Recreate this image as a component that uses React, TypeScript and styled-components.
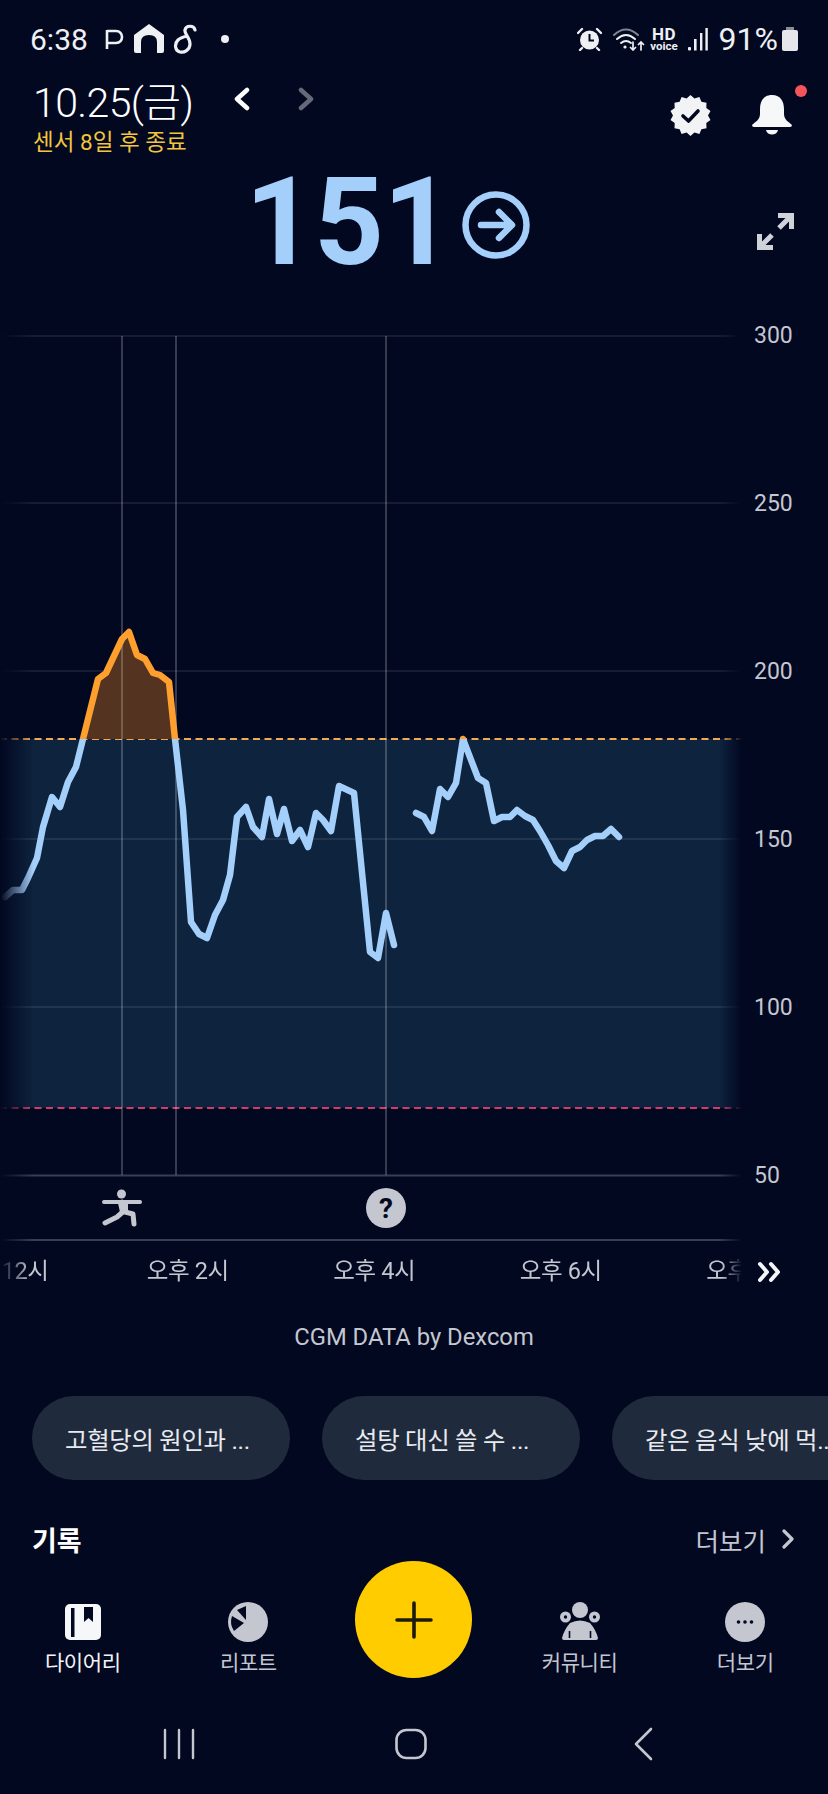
import styled, { createGlobalStyle } from 'styled-components';

const BG = '#020820';
const BLUE = '#a5cffb';
const GRAY = '#c4c6d0';
const FONT = `Roboto, "Noto Sans CJK KR", sans-serif`;

const GlobalStyle = createGlobalStyle`
    html, body {
        margin: 0;
        padding: 0;
        background: ${BG};
    }
`

const Page = styled.div`
    width: 828px;
    height: 1794px;
    overflow: hidden;
    background: ${BG};
    font-family: ${FONT};
    color: #fff;
    display: flex;
    flex-direction: column;
`

const StatusBar = styled.div`
    height: 70px;
    flex-shrink: 0;
    padding: 8px 29px 0 30px;
    box-sizing: border-box;
    display: flex;
    align-items: center;
    justify-content: space-between;
    font-size: 30px;
    color: #eef0f3;
`

const StatusGroup = styled.div`
    display: flex;
    align-items: center;
`

const Clock = styled.span`
    margin-right: 17px;
`

const HdBadge = styled.div`
    width: 29px;
    display: flex;
    flex-direction: column;
    align-items: center;
    font-weight: 700;
    font-size: 17px;
    line-height: 13px;
    letter-spacing: 0.5px;
    margin: 0 9px 0 3px;
    span {
        font-size: 11.5px;
        line-height: 10px;
        letter-spacing: 0;
    }
`

const Percent = styled.span`
    font-size: 32px;
    margin: 0 3px 0 11px;
`

const Header = styled.div`
    height: 90px;
    flex-shrink: 0;
    padding: 0 27px 0 33px;
    box-sizing: border-box;
    display: flex;
    justify-content: space-between;
    align-items: flex-start;
`

const DateRow = styled.div`
    display: flex;
    align-items: center;
    height: 58px;
`

const DateText = styled.span`
    font-size: 41px;
    font-weight: 300;
    letter-spacing: -0.6px;
    margin-right: 41px;
`

const SensorNote = styled.div`
    font-size: 22.5px;
    line-height: 26px;
    margin-top: 1px;
    color: #f2c53d;
`

const HeaderIcons = styled.div`
    position: relative;
    display: flex;
    gap: 41px;
    padding: 25px 9px 0 0;
`

const Reading = styled.div`
    height: 161px;
    flex-shrink: 0;
    padding: 0 34px 0 245px;
    box-sizing: border-box;
    display: flex;
    align-items: flex-start;
`

const Value = styled.span`
    margin-top: 2px;
    font-size: 122px;
    line-height: 122px;
    font-weight: 700;
    color: ${BLUE};
    letter-spacing: -1px;
`

const TrendIcon = styled.svg`
    margin: 31px 0 0 10px;
`

const ExpandIcon = styled.svg`
    margin: 53px 0 0 auto;
`

const ChartRow = styled.div`
    display: flex;
    height: 925px;
    flex-shrink: 0;
`

const YAxis = styled.div`
    display: flex;
    flex-direction: column;
    gap: 138px;
    padding-left: 12px;
`

const YLabel = styled.span`
    height: 30px;
    line-height: 30px;
    font-size: 23px;
    color: ${GRAY};
`

const TimeRow = styled.div`
    height: 52px;
    flex-shrink: 0;
    display: flex;
    align-items: center;
`

const TimeTrack = styled.div`
    width: 742px;
    overflow: hidden;
    display: flex;
    padding-bottom: 6px;
    -webkit-mask-image: linear-gradient(to right, transparent 0, #000 30px, #000 722px, transparent 742px);
    mask-image: linear-gradient(to right, transparent 0, #000 30px, #000 722px, transparent 742px);
`

const TimeLabels = styled.div`
    display: flex;
    margin-left: -92px;
`

const TimeLabel = styled.span`
    width: 186.5px;
    flex-shrink: 0;
    text-align: center;
    font-size: 23.5px;
    letter-spacing: -0.4px;
    color: ${GRAY};
`

const SkipIcon = styled.svg`
    margin-left: 15px;
`

const Credit = styled.div`
    height: 78px;
    flex-shrink: 0;
    display: flex;
    align-items: center;
    justify-content: center;
    font-size: 23.8px;
    color: ${GRAY};
`

const Chips = styled.div`
    margin-top: 20px;
    padding-left: 32px;
    display: flex;
    gap: 32px;
    overflow: hidden;
    flex-shrink: 0;
`

const Chip = styled.div`
    width: 258px;
    height: 84px;
    flex-shrink: 0;
    box-sizing: border-box;
    padding-left: 33px;
    border-radius: 42px;
    background: #1f2b3d;
    display: flex;
    align-items: center;
    font-size: 24.4px;
    letter-spacing: -0.3px;
    color: #e8eaef;
    white-space: nowrap;
    overflow: hidden;
`

const SectionHead = styled.div`
    margin-top: 41px;
    height: 36px;
    flex-shrink: 0;
    padding: 0 34px 0 32px;
    display: flex;
    align-items: center;
    justify-content: space-between;
`

const SectionTitle = styled.span`
    font-size: 27px;
    font-weight: 700;
`

const MoreLink = styled.span`
    display: flex;
    align-items: center;
    gap: 16px;
    font-size: 25.5px;
    color: ${GRAY};
`

const NavBar = styled.div`
    margin-top: 4px;
    height: 119px;
    flex-shrink: 0;
    display: grid;
    grid-template-columns: repeat(5, 1fr);
`

const NavItem = styled.div<{ $active?: boolean }>`
    display: flex;
    flex-direction: column;
    align-items: center;
    padding-top: 41px;
    gap: 8px;
    font-size: 21px;
    line-height: 26px;
    letter-spacing: -0.4px;
    color: ${(p) => (p.$active ? '#f4f5f8' : GRAY)};
`

const NavIconBox = styled.div`
    height: 40px;
    display: flex;
    align-items: center;
    justify-content: center;
`

const Fab = styled.div`
    width: 117px;
    height: 117px;
    border-radius: 50%;
    background: #ffcc00;
    justify-self: center;
    display: flex;
    align-items: center;
    justify-content: center;
`

const SystemNav = styled.div`
    margin-top: 34px;
    height: 60px;
    flex-shrink: 0;
    padding-left: 63px;
    display: flex;
`

const SystemButton = styled.div`
    width: 232px;
    display: flex;
    align-items: center;
    justify-content: center;
`

const reading1: [number, number][] = [
    [5, 897], [13, 890], [22, 890], [28, 878], [37, 858], [43, 827], [52, 797], [60, 807], [68, 782], [76, 767],
    [83, 739], [98, 679], [106, 673], [122, 639], [129, 632], [137, 655], [145, 659], [153, 673], [160, 675], [169, 682],
    [175, 739], [183, 810], [191, 922], [199, 934], [207, 938], [215, 915], [223, 900], [230, 875], [237, 817], [246, 807],
    [253, 827], [262, 837], [269, 799], [277, 834], [284, 809], [292, 841], [300, 830], [308, 847], [316, 813], [323, 820],
    [331, 831], [339, 786], [354, 793], [370, 952], [378, 958], [386, 913], [394, 945],
];

const reading2: [number, number][] = [
    [416, 813], [424, 817], [432, 831], [440, 789], [448, 797], [456, 783], [463, 739], [478, 778], [486, 783], [494, 821],
    [502, 817], [510, 817], [517, 810], [525, 816], [533, 820], [540, 831], [548, 845], [556, 861], [564, 868], [572, 851],
    [580, 847], [587, 840], [595, 836], [603, 836], [611, 829], [619, 837],
];

const toPoints = (pts: [number, number][]) => pts.map((p) => p.join(',')).join(' ');
const peak = reading1.slice(10, 21);

const gridLines = [336, 503, 671, 839, 1007];
const eventLines = [122, 176, 386];
const yLabels = [300, 250, 200, 150, 100, 50];
const timeLabels = ['오후 12시', '오후 2시', '오후 4시', '오후 6시', '오후 8시'];

const badgePoints = Array.from({ length: 28 }, (_, i) => {
    const r = i % 2 === 0 ? 20.5 : 17.5;
    const a = (i * Math.PI) / 14;
    return `${(20.5 + r * Math.sin(a)).toFixed(1)},${(20.5 - r * Math.cos(a)).toFixed(1)}`;
}).join(' ');

const GlucoseChart = () => (
    <svg width="742" height="925" viewBox="0 321 742 925" style={{ flexShrink: 0 }}>
        <defs>
            <linearGradient id="edgeFade" x1="0" x2="742" y1="0" y2="0" gradientUnits="userSpaceOnUse">
                <stop offset="0" stopColor="#fff" stopOpacity="0" />
                <stop offset="0.045" stopColor="#fff" />
                <stop offset="0.97" stopColor="#fff" />
                <stop offset="1" stopColor="#fff" stopOpacity="0" />
            </linearGradient>
            <mask id="edgeMask" maskUnits="userSpaceOnUse" x="0" y="321" width="742" height="925">
                <rect x="0" y="321" width="742" height="925" fill="url(#edgeFade)" />
            </mask>
            <clipPath id="aboveRange"><rect x="0" y="321" width="742" height="418" /></clipPath>
            <clipPath id="inRange"><rect x="0" y="739" width="742" height="500" /></clipPath>
        </defs>
        <g mask="url(#edgeMask)">
            <rect x="0" y="739" width="742" height="369" fill="#0e233e" />
            {gridLines.map((y) => (
                <line key={y} x1="0" x2="742" y1={y} y2={y} stroke="#fff" strokeOpacity="0.11" strokeWidth="1.5" />
            ))}
            <line x1="0" x2="742" y1="1175.5" y2="1175.5" stroke="#fff" strokeOpacity="0.22" strokeWidth="2" />
            <line x1="0" x2="742" y1="1240" y2="1240" stroke="#fff" strokeOpacity="0.22" strokeWidth="2" />
            <line x1="0" x2="742" y1="739" y2="739" stroke="#f2a94f" strokeWidth="2" strokeDasharray="7 4.5" />
            <line x1="0" x2="742" y1="1108" y2="1108" stroke="#d23a6e" strokeWidth="2" strokeDasharray="7 4.5" />
            <polygon points={toPoints(peak)} fill="#543420" />
            {eventLines.map((x) => (
                <line key={x} x1={x} x2={x} y1="336" y2="1175" stroke="#fff" strokeOpacity="0.28" strokeWidth="1.5" />
            ))}
            <g fill="none" strokeWidth="6.5" strokeLinejoin="round" strokeLinecap="round">
                <g clipPath="url(#inRange)" stroke={BLUE}>
                    <polyline points={toPoints(reading1)} />
                    <polyline points={toPoints(reading2)} />
                </g>
                <g clipPath="url(#aboveRange)" stroke="#ff9f2e">
                    <polyline points={toPoints(reading1)} />
                    <polyline points={toPoints(reading2)} />
                </g>
            </g>
        </g>
        <g stroke={GRAY} strokeWidth="5" strokeLinecap="round" strokeLinejoin="round" fill="none">
            <circle cx="121.5" cy="1194" r="4.5" fill={GRAY} stroke="none" />
            <path d="M104 1202 H140" strokeWidth="4" />
            <path d="M122 1202 L125 1210 L117 1217 L105 1223" />
            <path d="M123 1203 L125 1212 L133 1214 L134 1224" />
            <path d="M119 1203 H127 V1212 H121 Z" fill={GRAY} strokeWidth="2" />
        </g>
        <circle cx="386" cy="1208" r="20" fill={GRAY} />
        <text x="386" y="1218" textAnchor="middle" fontFamily="Roboto, sans-serif" fontWeight="700" fontSize="28" fill={BG}>?</text>
    </svg>
);

const App = () => {
    return (
        <Page>
            <GlobalStyle />
            <StatusBar>
                <StatusGroup>
                    <Clock>6:38</Clock>
                    <svg width="20" height="24" viewBox="0 0 20 24" fill="none" stroke="#eef0f3" strokeWidth="2.6" style={{ marginRight: 9 }}>
                        <path d="M2 3 V22 M2 4 H11 C19 4 19 16 11 16 H2" />
                    </svg>
                    <svg width="30" height="30" viewBox="0 0 30 30" fill="#eef0f3" style={{ marginRight: 9 }}>
                        <path d="M15 0 L30 11 V27 Q30 29 28 29 H23 V18 Q23 11 15 11 Q7 11 7 18 V29 H2 Q0 29 0 27 V11 Z" />
                    </svg>
                    <svg width="24" height="30" viewBox="0 0 24 30" fill="none" stroke="#eef0f3" strokeWidth="3.2" strokeLinecap="round" style={{ marginRight: 24 }}>
                        <path d="M22 6 C21 1 13 1 12 6 C11 10 17 13 17 20 C17 26 11 29 7 28 C2 27 1 20 5 16 C7 14 10 13 14 12" />
                    </svg>
                    <svg width="8" height="8" viewBox="0 0 8 8" fill="#eef0f3"><circle cx="4" cy="4" r="4" /></svg>
                </StatusGroup>
                <StatusGroup>
                    <svg width="25" height="24" viewBox="0 0 25 24" style={{ marginRight: 10 }}>
                        <circle cx="12.5" cy="13" r="9.5" fill="#eef0f3" />
                        <path d="M12.5 7 V13.5 H17" fill="none" stroke={BG} strokeWidth="2" />
                        <path d="M1 6 L5 2 M24 6 L20 2 M5 21 L3 23 M20 21 L22 23" stroke="#eef0f3" strokeWidth="2.4" strokeLinecap="round" />
                    </svg>
                    <svg width="35" height="24" viewBox="0 0 33 24" fill="none" strokeLinecap="round">
                        <path d="M1 8 Q13 -3 25 8" stroke="#7f8492" strokeWidth="2" />
                        <path d="M4 12 Q13 4 22 12 M8 16 Q13 12 18 16" stroke="#eef0f3" strokeWidth="2" />
                        <circle cx="12" cy="20" r="1.6" fill="#eef0f3" />
                        <path d="M20 15 V23 M17.5 20.5 L20 23 L22.5 20.5 M28 23 V15 M25.5 17.5 L28 15 L30.5 17.5" stroke="#eef0f3" strokeWidth="1.7" />
                    </svg>
                    <HdBadge>HD<span>voice</span></HdBadge>
                    <svg width="20" height="23" viewBox="0 0 20 23">
                        <g fill="#eef0f3">
                            <rect x="0" y="19" width="3" height="3.5" rx="1" />
                            <rect x="6" y="11" width="2.6" height="11.5" />
                            <rect x="12" y="5" width="2.4" height="17.5" />
                            <rect x="17.4" y="0" width="2.4" height="22.5" />
                        </g>
                    </svg>
                    <Percent>91%</Percent>
                    <svg width="18" height="24" viewBox="0 0 18 24">
                        <rect x="5" y="0" width="8" height="4" fill="#8a8d99" />
                        <rect x="1" y="3" width="16" height="21" rx="2" fill="#e6e7ea" />
                    </svg>
                </StatusGroup>
            </StatusBar>

            <Header>
                <div>
                    <DateRow>
                        <DateText>10.25(금)</DateText>
                        <svg width="16" height="24" viewBox="0 0 16 24" fill="none" stroke="#fff" strokeWidth="4.5" strokeLinecap="round" strokeLinejoin="round" style={{ marginRight: 48 }}>
                            <path d="M13 3 L3 12 L13 21" />
                        </svg>
                        <svg width="16" height="24" viewBox="0 0 16 24" fill="none" stroke="#666a78" strokeWidth="4.5" strokeLinecap="round" strokeLinejoin="round">
                            <path d="M3 3 L13 12 L3 21" />
                        </svg>
                    </DateRow>
                    <SensorNote>센서 8일 후 종료</SensorNote>
                </div>
                <HeaderIcons>
                    <svg width="41" height="41" viewBox="0 0 41 41">
                        <polygon points={badgePoints} fill="#f2f3f5" />
                        <path d="M13 21 L18.5 26 L28 16" fill="none" stroke={BG} strokeWidth="3.6" strokeLinecap="round" strokeLinejoin="round" />
                    </svg>
                    <svg width="40" height="41" viewBox="0 0 40 41" fill="#f6f7f9">
                        <path d="M20 0 C11 0 8 7 8 14 V19 C8 25 3 27 0 30 Q0 32 2 32 H38 Q40 32 40 30 C37 27 32 25 32 19 V14 C32 7 29 0 20 0 Z" />
                        <path d="M14 35 H26 C25 41 15 41 14 35 Z" />
                    </svg>
                    <svg width="12" height="12" viewBox="0 0 12 12" style={{ position: 'absolute', right: -6, top: 15 }}>
                        <circle cx="6" cy="6" r="6" fill="#f4545a" />
                    </svg>
                </HeaderIcons>
            </Header>

            <Reading>
                <Value>151</Value>
                <TrendIcon width="68" height="68" viewBox="0 0 68 68" fill="none" stroke={BLUE} strokeLinecap="round" strokeLinejoin="round">
                    <circle cx="34" cy="34" r="30.5" strokeWidth="6.5" />
                    <path d="M19 34 H49 M37 21 L50 34 L37 47" strokeWidth="6.5" />
                </TrendIcon>
                <ExpandIcon width="37" height="37" viewBox="0 0 37 37" fill="none" stroke="#d0d2da" strokeWidth="5">
                    <path d="M21 2.5 H34.5 V16 M34.5 2.5 L22 15" />
                    <path d="M2.5 21 V34.5 H16 M2.5 34.5 L15 22" />
                </ExpandIcon>
            </Reading>

            <ChartRow>
                <GlucoseChart />
                <YAxis>
                    {yLabels.map((label) => (
                        <YLabel key={label}>{label}</YLabel>
                    ))}
                </YAxis>
            </ChartRow>

            <TimeRow>
                <TimeTrack>
                    <TimeLabels>
                        {timeLabels.map((label) => (
                            <TimeLabel key={label}>{label}</TimeLabel>
                        ))}
                    </TimeLabels>
                </TimeTrack>
                <SkipIcon width="25" height="22" viewBox="0 0 25 22" fill="none" stroke="#f4f5f8" strokeWidth="4" strokeLinejoin="round" strokeLinecap="round">
                    <path d="M3 3 L10 11 L3 19 M14 3 L21 11 L14 19" />
                </SkipIcon>
            </TimeRow>

            <Credit>CGM DATA by Dexcom</Credit>

            <Chips>
                <Chip>고혈당의 원인과 ...</Chip>
                <Chip>설탕 대신 쓸 수 ...</Chip>
                <Chip>같은 음식 낮에 먹...</Chip>
            </Chips>

            <SectionHead>
                <SectionTitle>기록</SectionTitle>
                <MoreLink>
                    더보기
                    <svg width="12" height="20" viewBox="0 0 12 20" fill="none" stroke={GRAY} strokeWidth="3.2" strokeLinecap="round" strokeLinejoin="round">
                        <path d="M2 2 L10 10 L2 18" />
                    </svg>
                </MoreLink>
            </SectionHead>

            <NavBar>
                <NavItem $active>
                    <NavIconBox>
                        <svg width="36" height="36" viewBox="0 0 36 36">
                            <rect width="36" height="36" rx="5" fill="#f6f7f9" />
                            <rect x="6" y="4" width="3.5" height="29" fill={BG} />
                            <path d="M19 3 H28 V18 L23.5 14 L19 18 Z" fill={BG} />
                        </svg>
                    </NavIconBox>
                    다이어리
                </NavItem>
                <NavItem>
                    <NavIconBox>
                        <svg width="40" height="40" viewBox="-20 -20 40 40">
                            <circle r="20" fill={GRAY} />
                            <path d="M-2 -16 L-11 -12 L-2 -2 Z M-4 1 L-16 -6 A17 17 0 0 0 -14 9 Z" fill={BG} />
                        </svg>
                    </NavIconBox>
                    리포트
                </NavItem>
                <Fab>
                    <svg width="38" height="38" viewBox="0 0 38 38" stroke="#1c1a10" strokeWidth="3.6" strokeLinecap="round">
                        <path d="M19 2 V36 M2 19 H36" />
                    </svg>
                </Fab>
                <NavItem>
                    <NavIconBox>
                        <svg width="40" height="40" viewBox="0 0 40 40">
                            <g fill={GRAY}>
                                <circle cx="20" cy="8" r="8" />
                                <circle cx="5.5" cy="15" r="5.5" />
                                <circle cx="34.5" cy="15" r="5.5" />
                                <path d="M10 21 Q20 16 30 21 Q36 28 38 36 Q38 38 36 38 H4 Q2 38 2 36 Q4 28 10 21 Z" />
                            </g>
                            <circle cx="5.5" cy="15" r="1.7" fill={BG} />
                            <circle cx="34.5" cy="15" r="1.7" fill={BG} />
                            <path d="M9.5 29 V36 M30.5 29 V36" stroke={BG} strokeWidth="1.6" />
                        </svg>
                    </NavIconBox>
                    커뮤니티
                </NavItem>
                <NavItem>
                    <NavIconBox>
                        <svg width="40" height="40" viewBox="0 0 40 40">
                            <circle cx="20" cy="20" r="20" fill={GRAY} />
                            <g fill={BG}>
                                <circle cx="13.5" cy="20" r="1.8" />
                                <circle cx="20" cy="20" r="1.8" />
                                <circle cx="26.5" cy="20" r="1.8" />
                            </g>
                        </svg>
                    </NavIconBox>
                    더보기
                </NavItem>
            </NavBar>

            <SystemNav>
                <SystemButton>
                    <svg width="32" height="32" viewBox="0 0 32 32" stroke={GRAY} strokeWidth="2.4" strokeLinecap="round">
                        <path d="M2 2 V30 M16 2 V30 M30 2 V30" />
                    </svg>
                </SystemButton>
                <SystemButton>
                    <svg width="32" height="32" viewBox="0 0 32 32" fill="none" stroke={GRAY} strokeWidth="2.6">
                        <rect x="1.5" y="2" width="29" height="28" rx="10" />
                    </svg>
                </SystemButton>
                <SystemButton>
                    <svg width="20" height="34" viewBox="0 0 20 34" fill="none" stroke={GRAY} strokeWidth="2.6" strokeLinecap="round" strokeLinejoin="round">
                        <path d="M18 2 L3 17 L18 32" />
                    </svg>
                </SystemButton>
            </SystemNav>
        </Page>
    );
};

export default App;
